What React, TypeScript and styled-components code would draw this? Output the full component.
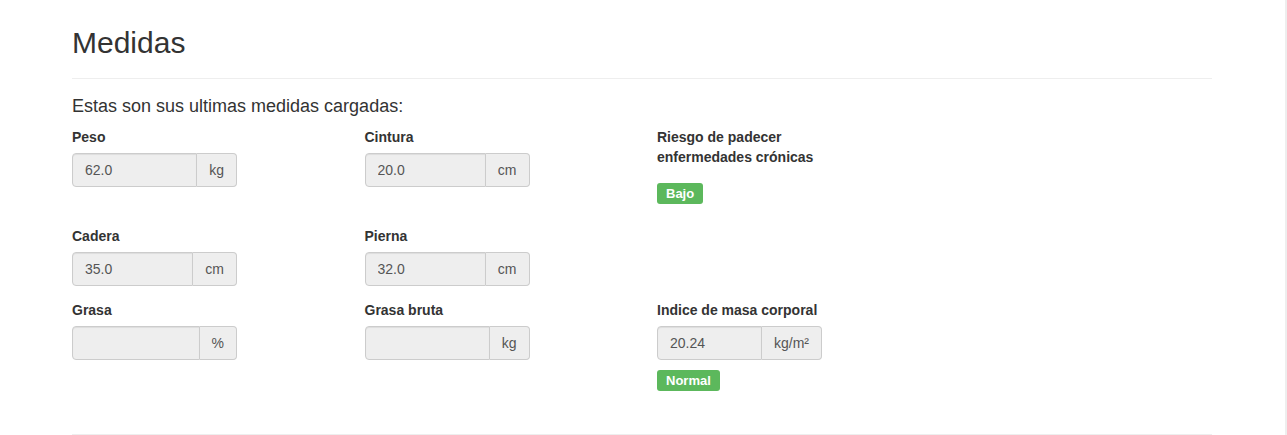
import React from 'react';
import styled, { createGlobalStyle } from 'styled-components';

const GlobalStyle = createGlobalStyle`
  html, body { margin: 0; padding: 0; background: #fff; }
  body {
    font-family: "Liberation Sans", Arial, Helvetica, sans-serif;
    font-size: 14px;
    line-height: 1.42857;
    color: #333;
  }
  * { box-sizing: border-box; }
`;

const Page = styled.div`
  min-height: 100vh;
  padding-right: 1px;
  border-right: 2px solid #eeeeee;
`;

const Container = styled.div`
  width: 1170px;
  margin: 0 auto;
  padding: 26px 15px 0;
`;

const PageHeader = styled.div`
  padding-bottom: 9px;
  margin-bottom: 18px;
  border-bottom: 1px solid #eee;
`;

const Title = styled.h2`
  margin: 0 0 10px;
  font-size: 30px;
  font-weight: 500;
  line-height: 1.1;
  color: #333;
`;

const Intro = styled.h4`
  margin: 0 0 11px;
  font-size: 18px;
  font-weight: 500;
  line-height: 1.1;
`;

const Row = styled.div`
  display: flex;
  margin: 0 -15px;
`;

const Col = styled.div`
  width: 25%;
  padding: 0 15px;
`;

const FormGroup = styled.div`
  padding-bottom: 15px;
`;

const Label = styled.label`
  display: block;
  max-width: 100%;
  padding-bottom: 5px;
  font-weight: 700;
`;

const InputGroup = styled.div`
  display: flex;
  width: 165px;
`;

const Input = styled.input`
  flex: 1;
  min-width: 0;
  height: 34px;
  padding: 6px 12px;
  font-family: inherit;
  font-size: 14px;
  line-height: 1.42857;
  color: #555;
  background: #eee;
  border: 1px solid #ccc;
  border-radius: 4px 0 0 4px;
  box-shadow: inset 0 1px 1px rgba(0, 0, 0, 0.075);
  outline: none;
`;

const Addon = styled.span`
  flex: none;
  padding: 6px 12px;
  font-size: 14px;
  line-height: 20px;
  color: #555;
  text-align: center;
  white-space: nowrap;
  background: #eee;
  border: 1px solid #ccc;
  border-left: 0;
  border-radius: 0 4px 4px 0;
`;

const BadgeRow = styled.div`
  display: flex;
  padding: 10px 0 8px;
`;

const Badge = styled.span<{ $tone?: string }>`
  display: block;
  height: 21px;
  padding: 4px 9px;
  font-size: 13px;
  font-weight: 700;
  line-height: 13px;
  color: #fff;
  white-space: nowrap;
  background: ${p => p.$tone || '#5cb85c'};
  border-radius: 3px;
`;

const Divider = styled.hr`
  margin: 20px 0;
  border: 0;
  border-top: 1px solid #eee;
`;

interface FieldProps {
  label: React.ReactNode;
  value: string;
  unit: string;
  badge?: string;
}

const Field: React.FunctionComponent<FieldProps> = ({ label, value, unit, badge }) => (
  <FormGroup>
    <Label>{label}</Label>
    <InputGroup>
      <Input readOnly value={value} />
      <Addon>{unit}</Addon>
    </InputGroup>
    {badge ? <BadgeRow><Badge>{badge}</Badge></BadgeRow> : <></>}
  </FormGroup>
);

export default function App() {
  return (
    <Page>
      <GlobalStyle />
      <Container>
        <PageHeader>
          <Title>Medidas</Title>
        </PageHeader>
        <Intro>Estas son sus ultimas medidas cargadas:</Intro>
        <Row>
          <Col><Field label="Peso" value="62.0" unit="kg" /></Col>
          <Col><Field label="Cintura" value="20.0" unit="cm" /></Col>
          <Col>
            <FormGroup>
              <Label>Riesgo de padecer<br />enfermedades crónicas</Label>
              <BadgeRow><Badge>Bajo</Badge></BadgeRow>
            </FormGroup>
          </Col>
        </Row>
        <Row>
          <Col><Field label="Cadera" value="35.0" unit="cm" /></Col>
          <Col><Field label="Pierna" value="32.0" unit="cm" /></Col>
        </Row>
        <Row>
          <Col><Field label="Grasa" value="" unit="%" /></Col>
          <Col><Field label="Grasa bruta" value="" unit="kg" /></Col>
          <Col><Field label="Indice de masa corporal" value="20.24" unit="kg/m²" badge="Normal" /></Col>
        </Row>
        <Divider />
      </Container>
    </Page>
  );
}
